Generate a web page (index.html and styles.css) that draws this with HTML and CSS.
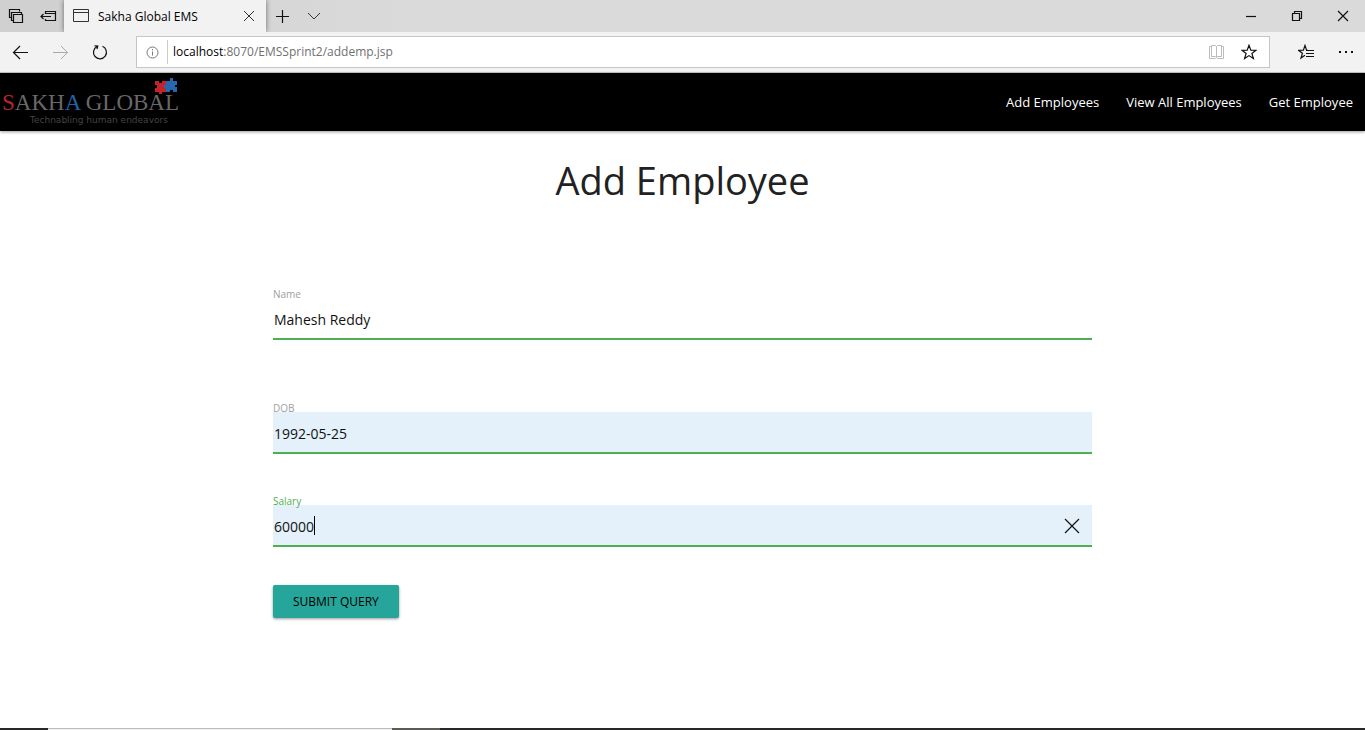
FILE: index.html
```html
<!DOCTYPE html>
<html lang="en">
<head>
<meta charset="utf-8">
<title>Sakha Global EMS</title>
<link rel="stylesheet" href="styles.css">
</head>
<body>
<div class="browser">
  <div class="tabbar">
    <div class="tab-tools">
      <button class="icon-btn" aria-label="Tabs set aside"><svg width="16" height="16" viewBox="0 0 16 16"><path class="bold" d="M3.500 9.500h-2v-8h10v2M5.500 12.500h-2v-8h10v2M5.500 6.500h9v8h-9z" /></svg></button>
      <button class="icon-btn" aria-label="Set these tabs aside"><svg width="18" height="16" viewBox="0 0 18 16"><path class="bold" d="M5.500 6V3.500h10v9h-10V11M5.500 5.500h10M11 8.500H1M3.500 6L1 8.500 3.500 11" /></svg></button>
    </div>
    <div class="tab">
      <svg width="18" height="16" viewBox="0 0 18 16"><path d="M1.500 1.500h15v12h-15zM1.500 4.500h15" /></svg>
      <span class="tab-title">Sakha Global EMS</span>
      <button class="icon-btn" aria-label="Close tab"><svg width="12" height="12" viewBox="0 0 12 12"><path d="M1 1l10 10M11 1L1 11" /></svg></button>
    </div>
    <div class="tab-add">
      <button class="icon-btn" aria-label="New tab"><svg width="14" height="14" viewBox="0 0 14 14"><path class="bold" d="M7.500 1v13M1 7.500h13" /></svg></button>
      <button class="icon-btn" aria-label="Show tab previews"><svg width="14" height="10" viewBox="0 0 14 10"><path d="M1 2l6 6 6-6" /></svg></button>
    </div>
    <div class="window-tools">
      <button class="icon-btn" aria-label="Minimize"><svg width="12" height="12" viewBox="0 0 12 12"><path class="bold" d="M1 6.500h10" /></svg></button>
      <button class="icon-btn" aria-label="Restore"><svg width="12" height="12" viewBox="0 0 12 12"><path class="bold" d="M1.500 3.500h7v7h-7zM3.500 3.500v-2h7v7h-2" /></svg></button>
      <button class="icon-btn" aria-label="Close"><svg width="12" height="12" viewBox="0 0 12 12"><path class="bold" d="M1 1l10 10M11 1L1 11" /></svg></button>
    </div>
  </div>
  <div class="toolbar">
    <div class="history">
      <button class="icon-btn" aria-label="Back"><svg width="16" height="16" viewBox="0 0 16 16"><path class="bold" d="M16 8.500H1.500M8 2L1.500 8.500 8 15" /></svg></button>
      <button class="icon-btn muted" aria-label="Forward"><svg width="16" height="16" viewBox="0 0 16 16"><path d="M1 8.500h14.500M9 2l6.500 6.500L9 15" /></svg></button>
      <button class="icon-btn" aria-label="Refresh"><svg width="16" height="16" viewBox="0 0 16 16"><path class="bold" d="M10.500 2.300A6.500 6.500 0 1 1 5 2.500M2.500 1.800L5.800 2 5 5.200" /></svg></button>
    </div>
    <div class="address">
      <svg class="info" width="14" height="14" viewBox="0 0 14 14"><circle cx="6.500" cy="7.500" r="5.500" /><path d="M6.500 6.500v4M6.500 4v1.300" /></svg>
      <div class="url"><b>localhost</b>:8070/EMSSprint2/addemp.jsp</div>
      <button class="icon-btn faint" aria-label="Reading view"><svg width="16" height="16" viewBox="0 0 16 16"><path d="M7.500 2.500L6.500 1.500h-4v11h4l1 1 1-1h4v-11h-4zM7.500 2.500v11M2.500 2.500h-2v12h6l1-1 1 1h6v-12h-2" /></svg></button>
      <button class="icon-btn" aria-label="Add to favorites"><svg width="16" height="16" viewBox="0 0 16 16"><path class="bold" d="M8 1.200l1.800 4.900 5.200.2-4.100 3.200 1.500 5L8 11.600l-4.400 2.900 1.500-5L1 6.300l5.200-.2z" /></svg></button>
    </div>
    <div class="hub">
      <button class="icon-btn" aria-label="Favorites"><svg width="16" height="16" viewBox="0 0 16 16"><path class="bold" d="M10 6.300L8.500 6 7 1.400 5.400 6.100l-4.900.2 3.900 3L3 14l4-2.700M8 6.500h8M8 9.500h8M8 12.500h8" /></svg></button>
      <button class="icon-btn" aria-label="More"><svg width="16" height="16" viewBox="0 0 16 16"><path class="dots" d="M1 7h2v2H1zM7 7h2v2H7zM13 7h2v2h-2z" /></svg></button>
    </div>
  </div>
</div>

<header class="site-nav">
  <a class="logo" href="#">
    <svg width="180" height="54" viewBox="0 0 180 54">
      <path fill="#c3242c" d="M155 6h4v2h3V6h4v4h-2v2h2v5h-4v2h-3v-2h-4v-4h2v-3h-2z" />
      <path fill="#2568b0" d="M166 6h4V3h3v3h4v4h-2v2h2v5h-4v-2h-3v2h-4v-4h-2v-3h2z" />
      <text class="logo-name" x="2" y="35"><tspan class="red">S</tspan>AKH<tspan class="blue">A</tspan> GLOBAL</text>
      <text class="logo-tag" x="30" y="48">Technabling human endeavors</text>
    </svg>
  </a>
  <nav class="links">
    <a href="#">Add Employees</a>
    <a href="#">View All Employees</a>
    <a href="#">Get Employee</a>
  </nav>
</header>

<main class="page">
  <h1>Add Employee</h1>
  <form class="form">
    <div class="field first">
      <label for="name">Name</label>
      <input id="name" type="text" value="Mahesh Reddy">
    </div>
    <div class="field filled">
      <label for="dob">DOB</label>
      <input id="dob" type="text" value="1992-05-25">
    </div>
    <div class="field filled active">
      <label for="salary">Salary</label>
      <input id="salary" type="text" value="60000">
      <span class="caret"></span>
      <button type="button" class="clear" aria-label="Clear"><svg width="16" height="16" viewBox="0 0 16 16"><path class="bold" d="M1 1l14 14M15 1L1 15" /></svg></button>
    </div>
    <button type="button" class="submit">SUBMIT QUERY</button>
  </form>
</main>

<footer class="taskbar"><span class="start"></span><span class="search"></span><span class="apps"></span><span class="rest"></span></footer>
</body>
</html>
```
FILE: styles.css
```css
* { box-sizing: border-box; }
body {
  margin: 0;
  min-height: 100vh;
  display: flex;
  flex-direction: column;
  background: #fff;
  color: #000;
  font-family: "Open Sans", "Noto Sans", sans-serif;
  font-size: 13px;
}
button { font: inherit; color: inherit; border: 0; cursor: pointer; }
svg { display: block; flex: none; }
svg path, svg circle { stroke-width: 1; }
.browser path, .browser circle, .clear path { fill: none; stroke: #333; }
.browser path.bold, .clear path { stroke: #111; stroke-width: 1.2; }
.browser path.dots { fill: #111; stroke: none; }
.icon-btn { display: flex; padding: 0; background: none; }
.browser .muted path { stroke: #aaa; }
.browser .faint path { stroke: #bbb; }

.tabbar { display: flex; height: 32px; background: linear-gradient(90deg, #cfcfcf, #dadada 30%); }
.tab-tools { display: flex; align-items: center; gap: 16px; width: 64px; padding-left: 8px; }
.tab {
  display: flex;
  align-items: center;
  width: 202px;
  padding: 0 11px 0 8px;
  background: #f2f2f2;
  box-shadow: 0 0 5px rgba(0, 0, 0, .5);
  clip-path: inset(0 -6px 0 -6px);
  font-size: 12px;
}
.tab-title { flex: 1; padding-left: 8px; }
.tab-add { display: flex; align-items: center; gap: 18px; padding-left: 9px; }
.window-tools { display: flex; align-items: center; gap: 34px; margin-left: auto; padding-right: 16px; }

.toolbar { display: flex; align-items: center; height: 41px; background: #f2f2f2; border-bottom: 1px solid #c8c8c8; }
.history { display: flex; gap: 24px; width: 136px; padding-left: 12px; }
.address {
  display: flex;
  align-items: center;
  flex: 1;
  height: 32px;
  padding: 0 12px 0 9px;
  background: #fff;
  border: 1px solid #c6c6c6;
}
.browser .info circle, .browser .info path { stroke: #777; }
.url { flex: 1; margin-left: 7px; padding-left: 5px; line-height: 24px; border-left: 1px solid #ccc; color: #707070; font-size: 12px; }
.url b { font-weight: 400; color: #000; }
.address .icon-btn + .icon-btn { margin-left: 16px; }
.hub { display: flex; gap: 24px; padding: 0 11px 0 28px; }

.site-nav {
  display: flex;
  align-items: center;
  justify-content: space-between;
  height: 58px;
  padding-right: 12px;
  background: #000;
  box-shadow: 0 1px 3px rgba(0, 0, 0, .4);
}
.logo-name { font: 23px "Liberation Serif", serif; fill: #686868; }
.logo-name .red { fill: #b8252f; }
.logo-name .blue { fill: #2463a8; }
.logo-tag { font: 9px "DejaVu Sans", sans-serif; fill: #444; }
.links { display: flex; gap: 27px; }
.links a { color: #fff; text-decoration: none; }

.page { flex: 1; width: 60%; margin: 0 auto; }
h1 { margin: 22px 0 83px; font-size: 38px; line-height: 54px; font-weight: 400; text-align: center; color: #212121; }
.form { display: flex; flex-direction: column; align-items: stretch; }
.field { position: relative; display: flex; flex-direction: column; margin-bottom: 43px; }
.field.first { margin-bottom: 64px; }
.field.active { margin-bottom: 38px; }
.field label { position: relative; z-index: 1; font-size: 10px; line-height: 8px; color: #9e9e9e; }
.field.active label { color: #4caf50; }
.field input {
  width: 100%;
  height: 42px;
  padding: 2px 1px 0;
  border: 0;
  border-bottom: 2px solid #4caf50;
  outline: 0;
  background: #fff;
  color: #111;
  font: inherit;
  font-size: 14px;
}
.field.filled input { background: #e4f1fb; }
.caret { position: absolute; left: 41px; top: 19px; width: 1px; height: 19px; background: #000; }
.clear { position: absolute; right: 12px; top: 21px; padding: 0; background: none; }
.submit {
  align-self: flex-start;
  padding: 0 20px;
  line-height: 33px;
  border-radius: 2px;
  background: #26a69a;
  box-shadow: 0 1px 3px rgba(0, 0, 0, .4);
  font-size: 12px;
}

.taskbar { display: flex; height: 2px; background: #282828; }
.start { width: 48px; }
.search { width: 344px; background: #f2f2f2; border-top: 1px solid #bbb; }
.apps { width: 48px; background: #5a5a56; }
.rest { flex: 1; }
```
